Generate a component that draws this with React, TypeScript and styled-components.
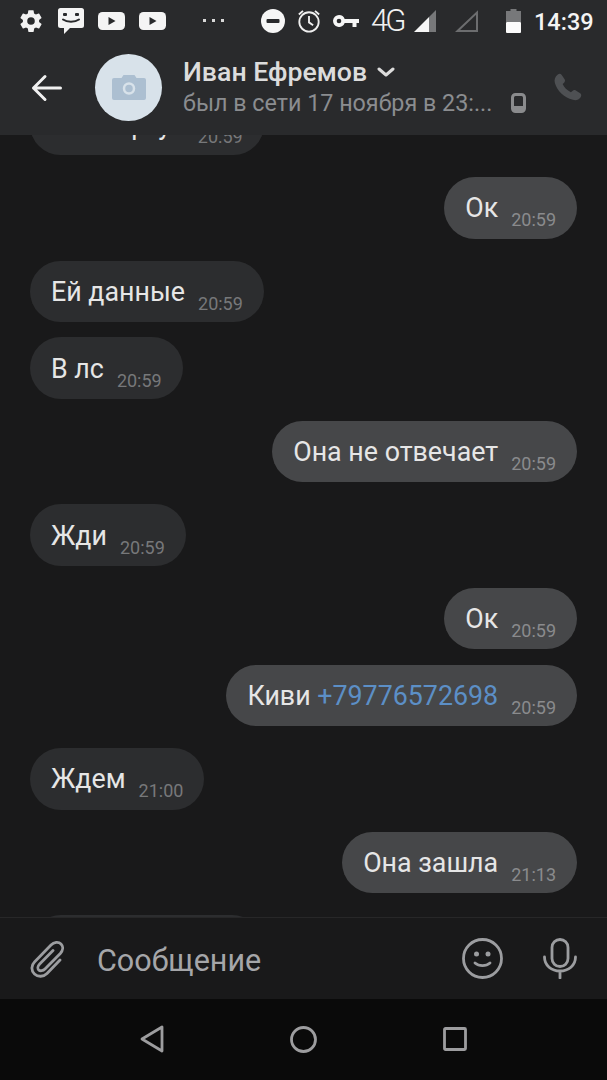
import styled, { createGlobalStyle } from "styled-components";

const GlobalStyle = createGlobalStyle`
  html, body {
    margin: 0;
    padding: 0;
    background: #19191a;
    font-family: Roboto, "Liberation Sans", sans-serif;
  }
  * { box-sizing: border-box; }
`;

const Screen = styled.div`
  width: 607px;
  height: 1080px;
  display: flex;
  flex-direction: column;
  overflow: hidden;
`;

const TopArea = styled.header`
  height: 135px;
  flex-shrink: 0;
  background: #292a2c;
`;

const StatusBar = styled.div`
  height: 41px;
  display: flex;
  align-items: center;
  padding: 0 14px 0 18px;
`;

const StatusGroup = styled.div<{ $gap?: number; $ml?: number }>`
  display: flex;
  align-items: center;
  gap: ${(p) => p.$gap ?? 0}px;
  margin-left: ${(p) => p.$ml ?? 0}px;
`;

const NetLabel = styled.span`
  color: #f1f1f1;
  font-size: 31px;
  line-height: 32px;
  letter-spacing: -3px;
  font-weight: 300;
  width: 32px;
  white-space: nowrap;
`;

const Clock = styled.span`
  color: #f4f4f4;
  font-size: 23.500px;
  font-weight: 500;
  margin-left: 13px;
  margin-top: 2px;
`;

const ChatBar = styled.div`
  display: flex;
  align-items: center;
  padding: 0 25px 0 30px;
  height: 93px;
`;

const BackBtn = styled.div`
  width: 65px;
  display: flex;
`;

const Avatar = styled.div`
  width: 67px;
  height: 67px;
  border-radius: 50%;
  background: #d8e2ea;
  display: flex;
  align-items: center;
  justify-content: center;
  flex-shrink: 0;
`;

const Peer = styled.div`
  margin-left: 21px;
  flex: 1;
  display: flex;
  flex-direction: column;
  margin-top: -1px;
`;

const PeerName = styled.div`
  color: #dcdcdc;
  font-size: 26.700px;
  font-weight: 500;
  line-height: 32px;
  display: flex;
  align-items: center;
  gap: 10px;
`;

const PeerStatus = styled.div`
  color: #8b8d90;
  font-size: 23.300px;
  line-height: 30px;
  display: flex;
  align-items: center;
  gap: 19px;
`;

const Messages = styled.main`
  flex: 1;
  min-height: 0;
  overflow: hidden;
  background: #19191a;
  padding: 0 30px;
`;

const MessageList = styled.div`
  margin-top: -63.500px;
  display: flex;
  flex-direction: column;
`;

const Bubble = styled.div<{ $out?: boolean; $same?: boolean }>`
  align-self: ${(p) => (p.$out ? "flex-end" : "flex-start")};
  height: 61.500px;
  margin-top: ${(p) => (p.$same ? 15.25 : 22)}px;
  padding: 0 21px;
  border-radius: 31px;
  background: ${(p) => (p.$out ? "#464749" : "#2c2d2f")};
  display: flex;
  align-items: center;
  gap: 13px;
  white-space: nowrap;
`;

const ClippedBubble = styled(Bubble)`
  width: 233px;
`;

const MsgText = styled.span`
  color: #e6e6e6;
  font-size: 26.800px;
  margin-top: 1px;
`;

const PhoneLink = styled.span`
  color: #5c8fc6;
`;

const MsgTime = styled.span<{ $out?: boolean }>`
  color: ${(p) => (p.$out ? "#8a8b8d" : "#77787a")};
  font-size: 18px;
  margin-top: 24px;
`;

const Composer = styled.footer`
  height: 82px;
  flex-shrink: 0;
  background: #19191a;
  border-top: 1px solid #272728;
  display: flex;
  align-items: center;
  padding: 0 30px 0 30px;
`;

const Placeholder = styled.div`
  flex: 1;
  margin-left: 33px;
  margin-top: 3px;
  color: #a5a6a9;
  font-size: 30.500px;
`;

const ComposerIcons = styled.div`
  display: flex;
  align-items: center;
  gap: 40px;
`;

const NavBar = styled.nav`
  height: 81px;
  flex-shrink: 0;
  background: #0a0a0a;
  display: flex;
  align-items: center;
  justify-content: center;
  gap: 126px;
  padding-bottom: 1px;
`;

const Gear = () => (
  <svg width="26" height="26" viewBox="0 0 24 24" fill="#f2f2f2">
    <path d="M19.400 13c.04-.33.1-.66.1-1s-.06-.67-.1-1l2.100-1.650a.5.5 0 0 0 .12-.64l-2-3.460a.5.5 0 0 0-.6-.22l-2.500 1a7.300 7.300 0 0 0-1.700-1L14.400 2.400A.5.5 0 0 0 14 2h-4a.5.5 0 0 0-.5.42l-.37 2.650a7.600 7.600 0 0 0-1.700 1l-2.480-1a.5.5 0 0 0-.6.22l-2 3.460a.5.5 0 0 0 .12.64L4.570 11c-.04.33-.07.66-.07 1s.03.67.07 1l-2.100 1.650a.5.5 0 0 0-.12.64l2 3.460c.12.22.38.3.6.22l2.490-1c.52.4 1.080.73 1.700 1l.37 2.650c.04.24.25.42.5.42h4c.25 0 .46-.18.5-.42l.37-2.650a7.600 7.600 0 0 0 1.700-1l2.480 1c.23.08.49 0 .6-.22l2-3.460a.5.5 0 0 0-.12-.64L19.400 13zM12 15.500a3.500 3.500 0 1 1 0-7 3.500 3.500 0 0 1 0 7z" />
  </svg>
);

const ChatFace = () => (
  <svg width="26" height="26" viewBox="0 0 26 26">
    <path d="M2.500 0h21A2.500 2.500 0 0 1 26 2.500v15a2.500 2.500 0 0 1-2.500 2.500H12l-6 6v-6H2.500A2.500 2.500 0 0 1 0 17.500v-15A2.500 2.500 0 0 1 2.500 0z" fill="#f4f4f4" />
    <rect x="5" y="5" width="4" height="3" rx="1" fill="#292a2c" />
    <rect x="17" y="5" width="4" height="3" rx="1" fill="#292a2c" />
    <path d="M5 11.500c4 3 12 3 16 0" stroke="#292a2c" strokeWidth="2" fill="none" strokeLinecap="round" />
  </svg>
);

const PlayBox = () => (
  <svg width="27" height="18" viewBox="0 0 27 18">
    <rect width="27" height="18" rx="4.500" fill="#f4f4f4" />
    <path d="M10.500 5l7 4-7 4z" fill="#292a2c" />
  </svg>
);

const Dots = () => (
  <svg width="22" height="3" viewBox="0 0 22 3" fill="#d8d8d8">
    <rect x="0" y="0" width="3" height="3" />
    <rect x="9" y="0" width="3" height="3" />
    <rect x="18" y="0" width="3" height="3" />
  </svg>
);

const DoNotDisturb = () => (
  <svg width="24" height="24" viewBox="0 0 24 24">
    <circle cx="12" cy="12" r="12" fill="#f6f6f6" />
    <rect x="5.500" y="10" width="13" height="4" rx="1" fill="#292a2c" />
  </svg>
);

const Alarm = () => (
  <svg width="24" height="26" viewBox="0 0 26 28" fill="none" stroke="#efefef" strokeWidth="2">
    <circle cx="13" cy="15" r="10.500" />
    <path d="M13 8.500v7l4.500 3M2 7L6.500 3M24 7L19.500 3" />
  </svg>
);

const VpnKey = () => (
  <svg width="26" height="12" viewBox="0 0 26 12">
    <path d="M6 0a6 6 0 0 1 5.700 4H26v4h-2.500v4h-4V8h-7.800A6 6 0 1 1 6 0z" fill="#f6f6f6" />
    <circle cx="6" cy="6" r="2.300" fill="#292a2c" />
  </svg>
);

const Signal = () => (
  <svg width="22" height="22" viewBox="0 0 22 22">
    <path d="M0 22L15 7v15z" fill="#f6f6f6" />
    <path d="M15 7l7-7v22h-7z" fill="#77787a" />
  </svg>
);

const EmptySignal = () => (
  <svg width="23" height="22" viewBox="0 0 23 22" fill="none" stroke="#6c6d6f" strokeWidth="2">
    <path d="M2.500 21L22 2.500V21z" />
  </svg>
);

const Battery = () => (
  <svg width="15" height="24" viewBox="0 0 15 24">
    <path d="M4.500 0h6v2H15v11H0V2h4.500z" fill="#77787a" />
    <rect y="13" width="15" height="11" rx="1" fill="#fbfbfb" />
  </svg>
);

const BackArrow = () => (
  <svg width="32" height="28" viewBox="0 0 32 28" fill="none" stroke="#f0f0f0" strokeWidth="3" strokeLinecap="round" strokeLinejoin="round">
    <path d="M30.500 14H3.500M15 2.500L3.500 14 15 25.500" />
  </svg>
);

const Camera = () => (
  <svg width="34" height="25" viewBox="0 0 34 25">
    <path d="M2 3h7.500l2-3h11l2 3H32a2 2 0 0 1 2 2v18a2 2 0 0 1-2 2H2a2 2 0 0 1-2-2V5a2 2 0 0 1 2-2z" fill="#acbfd1" />
    <circle cx="17" cy="13.500" r="5" fill="none" stroke="#d8e2ea" strokeWidth="2.500" />
  </svg>
);

const Chevron = () => (
  <svg width="18" height="10" viewBox="0 0 18 10" fill="none" stroke="#dcdcdc" strokeWidth="3" strokeLinecap="round" strokeLinejoin="round">
    <path d="M2 2l7 6 7-6" />
  </svg>
);

const MobileBadge = () => (
  <svg width="15" height="20" viewBox="0 0 15 20">
    <rect x="1.500" y="1.500" width="12" height="17" rx="3" fill="none" stroke="#8a8b8d" strokeWidth="3" />
    <rect x="3" y="13" width="9" height="4" fill="#8a8b8d" />
  </svg>
);

const Phone = () => (
  <svg width="29" height="29" viewBox="0 0 30 30">
    <path d="M5 1.500c1.500-1 3-.8 4 .5l3 4.500c.8 1.300.5 2.500-.5 3.500l-1.500 1.500c1.500 3.500 4.500 6.500 8.500 8.500l1.600-1.500c1.100-1 2.300-1.200 3.500-.5l4.500 3c1.300 1 1.500 2.500.5 4-2 2.800-4.800 3.700-8 2.700C11 25 4.500 18.500 2 10.500 1 7 2 3.800 5 1.500z" fill="#4e5053" />
  </svg>
);

const Clip = () => (
  <svg width="34" height="38" viewBox="0 0 34 38" fill="none" stroke="#9c9da0" strokeWidth="2.800" strokeLinecap="round" strokeLinejoin="round">
    <path d="M30 20L17 33.500c-3.500 3.500-9 3.700-12.500 .5S1 25.500 4.500 22L21 5c3-3 7.500-3.500 10-1s2 6.500-.7 9.500L15 29c-2 2-5 2.200-6.300 .9s-1-4 1-6L23 10.500" />
  </svg>
);

const Smile = () => (
  <svg width="41" height="41" viewBox="0 0 41 41" fill="none" stroke="#9c9da0" strokeWidth="2.800">
    <circle cx="20.500" cy="20.500" r="19" />
    <circle cx="14.500" cy="16" r="2.500" fill="#9c9da0" stroke="none" />
    <circle cx="26" cy="16" r="2.500" fill="#9c9da0" stroke="none" />
    <path d="M13 25c4 3.500 11 3.500 15 0" strokeLinecap="round" />
  </svg>
);

const Mic = () => (
  <svg width="34" height="41" viewBox="0 0 34 41" fill="none" stroke="#9c9da0" strokeWidth="2.800" strokeLinecap="round">
    <rect x="9" y="1.500" width="16" height="27" rx="8" />
    <path d="M1.500 19c0 8.500 7 14 15.500 14s15.500-5.500 15.500-14M17 33v7" />
  </svg>
);

const NavBack = () => (
  <svg width="24" height="28" viewBox="0 0 24 28" fill="none" stroke="#9d9d9f" strokeWidth="2.800" strokeLinejoin="round">
    <path d="M22 2v24L2 14z" />
  </svg>
);

const NavHome = () => (
  <svg width="27" height="27" viewBox="0 0 27 27" fill="none" stroke="#9d9d9f" strokeWidth="2.800">
    <circle cx="13.500" cy="13.500" r="12" />
  </svg>
);

const NavRecent = () => (
  <svg width="24" height="24" viewBox="0 0 24 24" fill="none" stroke="#9d9d9f" strokeWidth="2.800" strokeLinejoin="round">
    <rect x="1.500" y="1.500" width="21" height="21" rx="1" />
  </svg>
);

interface IMessage {
  id: number;
  text: React.ReactNode;
  time: string;
  out?: boolean;
  same?: boolean;
}

const messages: IMessage[] = [
  { id: 1, text: "Вот карту!!", time: "20:59" },
  { id: 2, text: "Ок", time: "20:59", out: true },
  { id: 3, text: "Ей данные", time: "20:59" },
  { id: 4, text: "В лс", time: "20:59", same: true },
  { id: 5, text: "Она не отвечает", time: "20:59", out: true },
  { id: 6, text: "Жди", time: "20:59" },
  { id: 7, text: "Ок", time: "20:59", out: true },
  {
    id: 8,
    text: (
      <>
        Киви <PhoneLink>+79776572698</PhoneLink>
      </>
    ),
    time: "20:59",
    out: true,
    same: true,
  },
  { id: 9, text: "Ждем", time: "21:00" },
  { id: 10, text: "Она зашла", time: "21:13", out: true },
];

function App() {
  return (
    <Screen>
      <GlobalStyle />
      <TopArea>
        <StatusBar>
          <StatusGroup $gap={14}>
            <Gear />
            <ChatFace />
            <PlayBox />
            <PlayBox />
          </StatusGroup>
          <StatusGroup $ml={37}>
            <Dots />
          </StatusGroup>
          <StatusGroup $gap={12} $ml={36}>
            <DoNotDisturb />
            <Alarm />
            <VpnKey />
            <NetLabel>4G</NetLabel>
          </StatusGroup>
          <StatusGroup $ml={11}>
            <Signal />
          </StatusGroup>
          <StatusGroup $ml={19}>
            <EmptySignal />
          </StatusGroup>
          <StatusGroup $ml={28}>
            <Battery />
            <Clock>14:39</Clock>
          </StatusGroup>
        </StatusBar>
        <ChatBar>
          <BackBtn>
            <BackArrow />
          </BackBtn>
          <Avatar>
            <Camera />
          </Avatar>
          <Peer>
            <PeerName>
              Иван Ефремов
              <Chevron />
            </PeerName>
            <PeerStatus>
              был в сети 17 ноября в 23:...
              <MobileBadge />
            </PeerStatus>
          </Peer>
          <Phone />
        </ChatBar>
      </TopArea>
      <Messages>
        <MessageList>
          {messages.map((m) => (
            <Bubble key={m.id} $out={m.out} $same={m.same}>
              <MsgText>{m.text}</MsgText>
              <MsgTime $out={m.out}>{m.time}</MsgTime>
            </Bubble>
          ))}
          <ClippedBubble />
        </MessageList>
      </Messages>
      <Composer>
        <Clip />
        <Placeholder>Сообщение</Placeholder>
        <ComposerIcons>
          <Smile />
          <Mic />
        </ComposerIcons>
      </Composer>
      <NavBar>
        <NavBack />
        <NavHome />
        <NavRecent />
      </NavBar>
    </Screen>
  );
}

export default App;
